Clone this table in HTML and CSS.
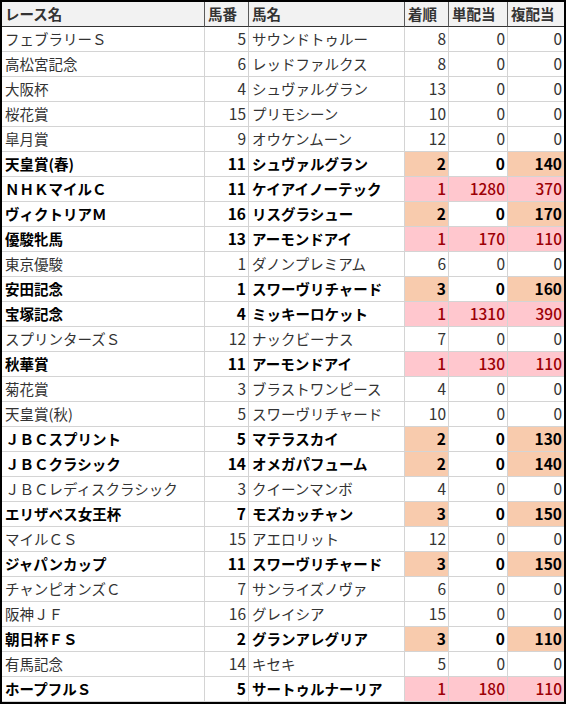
FILE: index.html
```html
<!DOCTYPE html>
<html lang="ja">
<head>
<meta charset="utf-8">
<link rel="stylesheet" href="styles.css">
</head>
<body>
<div class="sheet">
  <div class="c h">レース名</div><div class="c h">馬番</div><div class="c h">馬名</div><div class="c h">着順</div><div class="c h">単配当</div><div class="c h last">複配当</div>

  <div class="c t">フェブラリーＳ</div><div class="c n">5</div><div class="c t">サウンドトゥルー</div><div class="c n">8</div><div class="c n">0</div><div class="c n last">0</div>
  <div class="c t">高松宮記念</div><div class="c n">6</div><div class="c t">レッドファルクス</div><div class="c n">8</div><div class="c n">0</div><div class="c n last">0</div>
  <div class="c t">大阪杯</div><div class="c n">4</div><div class="c t">シュヴァルグラン</div><div class="c n">13</div><div class="c n">0</div><div class="c n last">0</div>
  <div class="c t">桜花賞</div><div class="c n">15</div><div class="c t">プリモシーン</div><div class="c n">10</div><div class="c n">0</div><div class="c n last">0</div>
  <div class="c t">皐月賞</div><div class="c n">9</div><div class="c t">オウケンムーン</div><div class="c n">12</div><div class="c n">0</div><div class="c n last">0</div>
  <div class="c t b">天皇賞(春)</div><div class="c n b">11</div><div class="c t b">シュヴァルグラン</div><div class="c n b place">2</div><div class="c n b">0</div><div class="c n b place last">140</div>
  <div class="c t b">ＮＨＫマイルＣ</div><div class="c n b">11</div><div class="c t b">ケイアイノーテック</div><div class="c n win">1</div><div class="c n win">1280</div><div class="c n win last">370</div>
  <div class="c t b">ヴィクトリアＭ</div><div class="c n b">16</div><div class="c t b">リスグラシュー</div><div class="c n b place">2</div><div class="c n b">0</div><div class="c n b place last">170</div>
  <div class="c t b">優駿牝馬</div><div class="c n b">13</div><div class="c t b">アーモンドアイ</div><div class="c n win">1</div><div class="c n win">170</div><div class="c n win last">110</div>
  <div class="c t">東京優駿</div><div class="c n">1</div><div class="c t">ダノンプレミアム</div><div class="c n">6</div><div class="c n">0</div><div class="c n last">0</div>
  <div class="c t b">安田記念</div><div class="c n b">1</div><div class="c t b">スワーヴリチャード</div><div class="c n b place">3</div><div class="c n b">0</div><div class="c n b place last">160</div>
  <div class="c t b">宝塚記念</div><div class="c n b">4</div><div class="c t b">ミッキーロケット</div><div class="c n win">1</div><div class="c n win">1310</div><div class="c n win last">390</div>
  <div class="c t">スプリンターズＳ</div><div class="c n">12</div><div class="c t">ナックビーナス</div><div class="c n">7</div><div class="c n">0</div><div class="c n last">0</div>
  <div class="c t b">秋華賞</div><div class="c n b">11</div><div class="c t b">アーモンドアイ</div><div class="c n win">1</div><div class="c n win">130</div><div class="c n win last">110</div>
  <div class="c t">菊花賞</div><div class="c n">3</div><div class="c t">ブラストワンピース</div><div class="c n">4</div><div class="c n">0</div><div class="c n last">0</div>
  <div class="c t">天皇賞(秋)</div><div class="c n">5</div><div class="c t">スワーヴリチャード</div><div class="c n">10</div><div class="c n">0</div><div class="c n last">0</div>
  <div class="c t b">ＪＢＣスプリント</div><div class="c n b">5</div><div class="c t b">マテラスカイ</div><div class="c n b place">2</div><div class="c n b">0</div><div class="c n b place last">130</div>
  <div class="c t b">ＪＢＣクラシック</div><div class="c n b">14</div><div class="c t b">オメガパフューム</div><div class="c n b place">2</div><div class="c n b">0</div><div class="c n b place last">140</div>
  <div class="c t">ＪＢＣレディスクラシック</div><div class="c n">3</div><div class="c t">クイーンマンボ</div><div class="c n">4</div><div class="c n">0</div><div class="c n last">0</div>
  <div class="c t b">エリザベス女王杯</div><div class="c n b">7</div><div class="c t b">モズカッチャン</div><div class="c n b place">3</div><div class="c n b">0</div><div class="c n b place last">150</div>
  <div class="c t">マイルＣＳ</div><div class="c n">15</div><div class="c t">アエロリット</div><div class="c n">12</div><div class="c n">0</div><div class="c n last">0</div>
  <div class="c t b">ジャパンカップ</div><div class="c n b">11</div><div class="c t b">スワーヴリチャード</div><div class="c n b place">3</div><div class="c n b">0</div><div class="c n b place last">150</div>
  <div class="c t">チャンピオンズＣ</div><div class="c n">7</div><div class="c t">サンライズノヴァ</div><div class="c n">6</div><div class="c n">0</div><div class="c n last">0</div>
  <div class="c t">阪神ＪＦ</div><div class="c n">16</div><div class="c t">グレイシア</div><div class="c n">15</div><div class="c n">0</div><div class="c n last">0</div>
  <div class="c t b">朝日杯ＦＳ</div><div class="c n b">2</div><div class="c t b">グランアレグリア</div><div class="c n b place">3</div><div class="c n b">0</div><div class="c n b place last">110</div>
  <div class="c t">有馬記念</div><div class="c n">14</div><div class="c t">キセキ</div><div class="c n">5</div><div class="c n">0</div><div class="c n last">0</div>
  <div class="c t b">ホープフルＳ</div><div class="c n b">5</div><div class="c t b">サートゥルナーリア</div><div class="c n win">1</div><div class="c n win">180</div><div class="c n win last">110</div>
</div>
</body>
</html>
```

FILE: styles.css
```css
html, body {
  margin: 0;
  padding: 0;
  background: #ffffff;
}

.sheet {
  box-sizing: border-box;
  width: 566px;
  height: 704px;
  border: 2px solid #000000;
  display: grid;
  grid-template-columns: 203px 44px 156px 44px 59px 56px;
  grid-template-rows: 25px repeat(27, 25px);
  font-family: "Noto Sans CJK JP", "Noto Sans", sans-serif;
  font-size: 14.5px;
  color: #333333;
  overflow: hidden;
}

.c {
  box-sizing: border-box;
  border-right: 1px solid #d4d4d4;
  border-bottom: 1px solid #d4d4d4;
  display: flex;
  align-items: center;
  white-space: nowrap;
  overflow: hidden;
  line-height: 1;
}

.c.last {
  border-right: none;
}

.h {
  background: #f2f2f2;
  color: #333333;
  font-weight: 700;
  padding-left: 3px;
  border-right-color: #5a5a5a;
  border-bottom-color: #333333;
}

.t {
  padding-left: 3px;
}

.n {
  justify-content: flex-end;
  padding-right: 2px;
  font-size: 15.5px;
}

.b {
  font-weight: 700;
  color: #000000;
}

.place {
  background: #f8cbad;
}

.win {
  background: #ffc7ce;
  color: #9c0006;
  font-weight: 500;
}
```
